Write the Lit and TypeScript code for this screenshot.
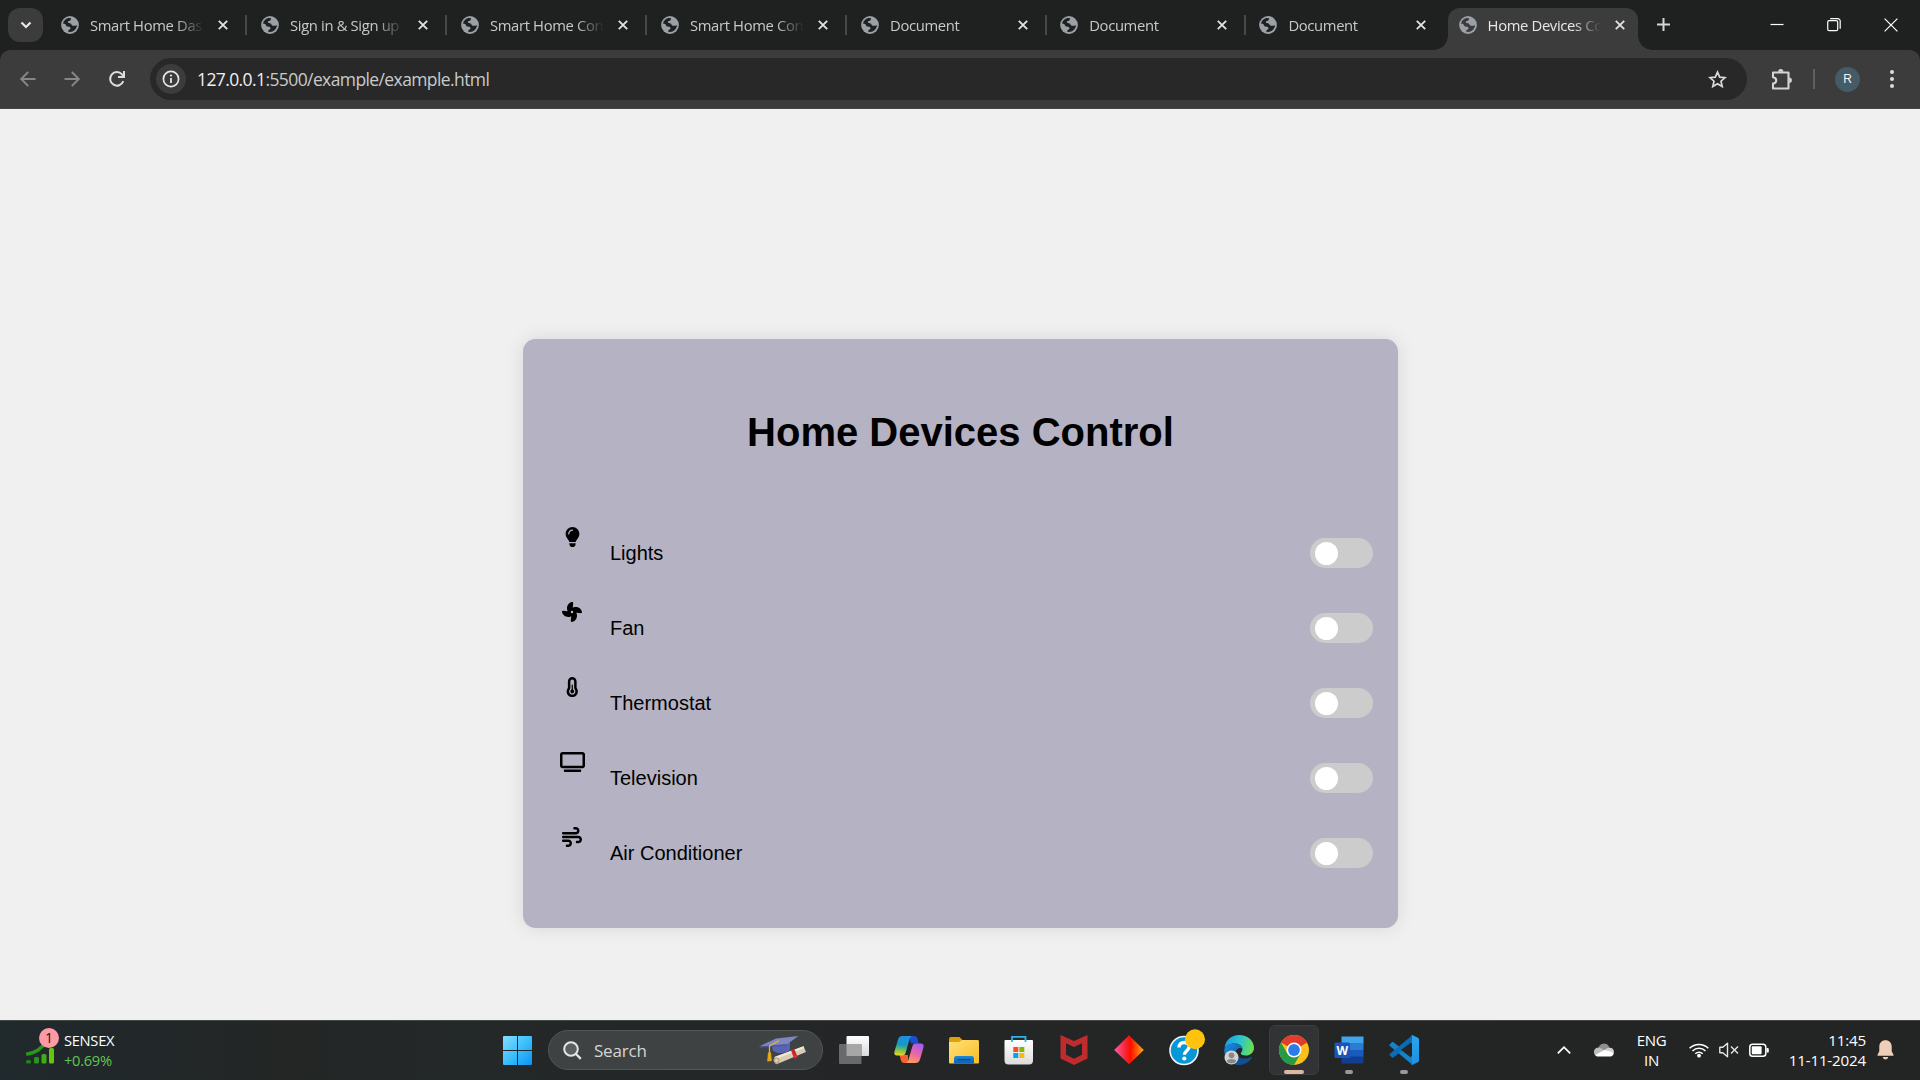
import { LitElement, html, svg, css, nothing } from "lit";
import { customElement, property } from "lit/decorators.js";
import { classMap } from "lit/directives/class-map.js";

/* ---------- browser tab ---------- */

@customElement("browser-tab")
class BrowserTab extends LitElement {
  @property() label = "";
  @property({ type: Boolean, reflect: true }) active = false;
  @property({ type: Boolean }) divided = false;

  static styles = css`
    :host { display: block; height: 42px; }
    .tab {
      position: relative; box-sizing: border-box; height: 42px; width: 190px;
      display: flex; align-items: center; padding: 0 12.5px 8px 11px;
      color: #c7c9c8; border-radius: 12px 12px 0 0;
    }
    .active { background: #3c3c3c; color: #e6e8e8; }
    .active::before, .active::after {
      content: ""; position: absolute; bottom: 0; width: 14px; height: 14px;
    }
    .active::before { left: -14px; background: radial-gradient(circle at 0 0, transparent 13.5px, #3c3c3c 14px); }
    .active::after { right: -14px; background: radial-gradient(circle at 100% 0, transparent 13.5px, #3c3c3c 14px); }
    .favicon { width: 18px; height: 18px; flex: none; }
    .label {
      flex: 1; min-width: 0; margin: 0 12px 0 11px; white-space: nowrap;
      font: 14.8px/22px "Open Sans", sans-serif; letter-spacing: -0.35px;
      -webkit-mask-image: linear-gradient(90deg, #000 calc(100% - 30px), transparent calc(100% - 2px));
      mask-image: linear-gradient(90deg, #000 calc(100% - 30px), transparent calc(100% - 2px));
    }
    .close { width: 10px; height: 10px; flex: none; }
    .active .close { position: relative; left: -0.5px; }
    .divided::after {
      content: ""; position: absolute; right: -7px; top: 7px; width: 2px; height: 20px; background: #474848;
    }
  `;

  render() {
    return html`<div class=${classMap({ tab: true, active: this.active, divided: this.divided })}>
      <svg class="favicon" viewBox="0 0 18 18">
        <circle cx="9" cy="9" r="8.9" fill="#9aa0a6" />
        <path fill=${this.active ? "#3c3c3c" : "#1f2120"}
          d="M2 7.6C2.5 4.7 4.600 2.600 7.500 2l2.600 .3c-.1 1.600-.7 2.500-2.100 2.700-1 .2-1.200 .6-1.100 1.500 .7 .7 1.700 .5 2.700 1 1.100 .6 .9 1.900 2.100 2.200 1.400 .3 2.900-.2 4.400-.5-.3 2.800-2.200 5.300-4.700 6.300-.6 .3-1.500 .4-2.200 .500l-1.900-.2c-.3-1.200 .3-1.900 1.400-2.300 1-.4 1.100-1.500 .3-2.200-1.200-1-2.700-.3-3.600-1.300-.7-.7-.5-1.600-1.300-2-.7-.3-1.300-.1-2.100-.4z" />
      </svg>
      <span class="label">${this.label}</span>
      <svg class="close" viewBox="0 0 10 10"><path d="M.8.8l8.400 8.400M9.200.8L.8 9.200" stroke="#e3e3e3" stroke-width="1.800" /></svg>
    </div>`;
  }
}

/* ---------- browser window frame ---------- */

@customElement("browser-chrome")
class BrowserChrome extends LitElement {
  static styles = css`
    :host { display: block; background: #1f2120; }
    .strip { display: flex; height: 50px; padding: 8px 0 0 8px; box-sizing: border-box; }
    .menu { width: 35px; height: 34px; border-radius: 12px; background: #3c3c3c; display: grid; place-items: center; }
    .tabs { display: flex; gap: 10px; margin-left: 7px; }
    .tabs .narrow { margin-left: -0.8px; }
    .plus { margin: 10px 0 0 19.5px; width: 13px; height: 13px; }
    .controls { margin-left: auto; display: flex; align-items: flex-start; gap: 43px; padding: 10px 22px 0 0; }
    .controls svg { width: 14px; height: 14px; }
    .bar {
      height: 59px; box-sizing: border-box; background: #3c3c3c; border-radius: 10px 10px 0 0;
      border-bottom: 1px solid #4a4646; display: flex; align-items: center; padding: 0 21px 0 19px;
    }
    .nav { width: 18px; height: 18px; margin-right: 26px; }
    .reload { width: 18px; height: 18px; margin: 0 25px 0 1px; }
    .omni {
      width: 1597px; height: 42px; box-sizing: border-box; border-radius: 21px; background: #282828;
      display: flex; align-items: center; padding: 0 20px 0 6px; margin-left: -1px;
    }
    .info { width: 30px; height: 30px; border-radius: 50%; background: #3c3c3c; display: grid; place-items: center; }
    .url { margin-left: 11px; flex: 1; font: 17.5px/26px "Open Sans", sans-serif; letter-spacing: -0.6px; color: #c9cbcb; }
    .host { color: #f0f0f0; }
    .puzzle { width: 21px; height: 22px; margin: 0 0.5px 0 23.5px; }
    .rule { width: 2px; height: 20px; background: #5f6060; margin: 0 20px 0 21px; }
    .avatar {
      width: 25px; height: 25px; border-radius: 50%; background: #455b68; color: #f2f5f7;
      display: grid; place-items: center; font: 12px/25px "Liberation Sans", sans-serif;
    }
    .dots { width: 4px; height: 18px; margin-left: auto; margin-right: 5px; }
  `;

  private titles = [
    "Smart Home Das", "Sign in & Sign up", "Smart Home Con", "Smart Home Con",
    "Document", "Document", "Document", "Home Devices Co",
  ];

  render() {
    const last = this.titles.length - 1;
    return html`
      <div class="strip">
        <div class="menu"><svg width="12" height="8" viewBox="0 0 12 8" fill="none" stroke="#e8e8e8" stroke-width="2.200"><path d="M1.500 1.500L6 6l4.500-4.500" /></svg></div>
        <div class="tabs">
          ${this.titles.map((t, i) => html`<browser-tab class=${i > 4 ? "narrow" : ""} .label=${t} .active=${i === last} .divided=${i < last - 1}></browser-tab>`)}
        </div>
        <svg class="plus" viewBox="0 0 13 13"><path d="M6.500 0v13M0 6.500h13" stroke="#d5d6d6" stroke-width="2" /></svg>
        <div class="controls">
          <svg viewBox="0 0 14 14"><path d="M.5 6.500h13" stroke="#fff" stroke-width="1.200" /></svg>
          <svg viewBox="0 0 14 14" fill="none" stroke="#fff" stroke-width="1.200"><rect x=".7" y="2.700" width="10" height="10" rx="1.500" /><path d="M3.200.7h7.600a2.400 2.400 0 0 1 2.400 2.400v7.600" /></svg>
          <svg viewBox="0 0 14 14"><path d="M.6.6l12.800 12.800M13.400.6L.6 13.400" stroke="#fff" stroke-width="1.200" /></svg>
        </div>
      </div>
      <div class="bar">
        <svg class="nav" viewBox="0 0 18 18" fill="none" stroke="#858686" stroke-width="1.900"><path d="M16.500 9H2.500M9.200 2L2.200 9l7 7" /></svg>
        <svg class="nav" viewBox="0 0 18 18" fill="none" stroke="#858686" stroke-width="1.900"><path d="M1.500 9h14M8.800 2l7 7-7 7" /></svg>
        <svg class="reload" viewBox="0 0 18 18" fill="none" stroke="#dcdddd" stroke-width="2"><path d="M15.300 11.200A6.800 6.800 0 1 1 14 4.300L16 6.500M16 1v6h-6" /></svg>
        <div class="omni">
          <div class="info"><svg width="18" height="18" viewBox="0 0 18 18"><circle cx="9" cy="9" r="7.600" fill="none" stroke="#e6e6e6" stroke-width="1.700" /><path d="M9 8v5" stroke="#e6e6e6" stroke-width="1.800" /><circle cx="9" cy="5.500" r="1.100" fill="#e6e6e6" /></svg></div>
          <span class="url"><span class="host">127.0.0.1</span>:5500/example/example.html</span>
          <svg width="19" height="19" viewBox="0 0 19 19" fill="none" stroke="#d8d9d9" stroke-width="1.700"><path d="M9.500 2.200l2.200 4.900 5.300.5-4 3.600 1.200 5.300-4.700-2.800-4.700 2.800L6 11.200 2 7.600l5.300-.5z" /></svg>
        </div>
        <svg class="puzzle" viewBox="0 0 21 22"><path d="M2 4.500h15.500v16H2v-5c4.300-.6 4.300-5.600 0-6.200z" fill="none" stroke="#d3d4d4" stroke-width="2.100" stroke-linejoin="round" /><path d="M7 3.800a2.700 2.700 0 0 1 5.400 0zM18.200 9.500a2.700 2.700 0 0 1 0 5.400z" fill="#d3d4d4" /></svg>
        <div class="rule"></div>
        <div class="avatar">R</div>
        <svg class="dots" viewBox="0 0 4 18" fill="#dcdddd"><circle cx="2" cy="2.100" r="2" /><circle cx="2" cy="9" r="2" /><circle cx="2" cy="15.900" r="2" /></svg>
      </div>`;
  }
}

/* ---------- page: device card ---------- */

interface Device { name: string; box: string; width: number; path: string; }

const DEVICES: Device[] = [
  { name: "Lights", box: "0 0 384 512", width: 15, path: "M272 384c9.600-31.900 29.500-59.100 49.200-86.200l0 0c5.200-7.100 10.400-14.200 15.400-21.400c19.800-28.500 31.400-63 31.400-100.300C368 78.800 289.200 0 192 0S16 78.800 16 176c0 37.300 11.600 71.900 31.400 100.300c5 7.200 10.200 14.300 15.400 21.400l0 0c19.800 27.100 39.700 54.400 49.200 86.200H272zM192 512c44.200 0 80-35.800 80-80V416H112v16c0 44.200 35.800 80 80 80zM112 176c0 8.800-7.200 16-16 16s-16-7.200-16-16c0-61.900 50.100-112 112-112c8.800 0 16 7.200 16 16s-7.200 16-16 16c-44.200 0-80 35.800-80 80z" },
  { name: "Fan", box: "0 0 512 512", width: 20, path: "M258.600 0c-1.700 0-3.400 .1-5.100 .5C168 17 115.600 102.300 130.500 189.300c2.900 17 8.400 32.900 15.900 47.400L32 224H29.400C13.200 224 0 237.200 0 253.400c0 1.700 .1 3.400 .5 5.100C17 344 102.300 396.400 189.300 381.500c17-2.900 32.900-8.400 47.400-15.900L224 480v2.600c0 16.200 13.200 29.400 29.400 29.400c1.700 0 3.400-.1 5.100-.5C344 495 396.400 409.700 381.500 322.700c-2.900-17-8.400-32.900-15.900-47.400L480 288h2.600c16.200 0 29.400-13.200 29.400-29.400c0-1.700-.1-3.400-.5-5.100C495 168 409.700 115.600 322.700 130.500c-17 2.900-32.900 8.400-47.400 15.900L288 32V29.400C288 13.200 274.800 0 258.600 0zM256 224a32 32 0 1 1 0 64 32 32 0 1 1 0-64z" },
  { name: "Thermostat", box: "0 0 320 512", width: 12.5, path: "M160 64c-26.500 0-48 21.500-48 48V276.500c0 17.300-7.100 31.900-15.300 42.500C86.200 332.600 80 349.500 80 368c0 44.200 35.800 80 80 80s80-35.800 80-80c0-18.500-6.200-35.400-16.700-48.900c-8.200-10.600-15.300-25.200-15.300-42.500V112c0-26.500-21.500-48-48-48zM48 112C48 50.200 98.100 0 160 0s112 50.100 112 112V276.500c0 .1 .1 .3 .2 .6c.2 .6 .8 1.600 1.700 2.800c18.900 24.400 30.100 55 30.100 88.100c0 79.500-64.500 144-144 144S16 447.500 16 368c0-33.200 11.200-63.800 30.100-88.100c.9-1.200 1.500-2.200 1.700-2.800c.1-.3 .2-.5 .2-.6V112zM208 368c0 26.500-21.500 48-48 48s-48-21.500-48-48c0-20.900 13.400-38.700 32-45.300V208c0-8.800 7.200-16 16-16s16 7.200 16 16V322.700c18.600 6.600 32 24.400 32 45.300z" },
  { name: "Television", box: "0 0 640 512", width: 25, path: "M64 64V352H576V64H64zM0 64C0 28.700 28.700 0 64 0H576c35.300 0 64 28.700 64 64V352c0 35.300-28.700 64-64 64H64c-35.300 0-64-28.700-64-64V64zM128 448H512c17.700 0 32 14.300 32 32s-14.300 32-32 32H128c-17.700 0-32-14.300-32-32s14.300-32 32-32z" },
  { name: "Air Conditioner", box: "0 0 512 512", width: 20, path: "M288 32c0 17.700 14.300 32 32 32h32c17.700 0 32 14.300 32 32s-14.300 32-32 32H32c-17.700 0-32 14.300-32 32s14.300 32 32 32H352c53 0 96-43 96-96s-43-96-96-96H320c-17.700 0-32 14.300-32 32zm64 352c0 17.700 14.300 32 32 32h32c53 0 96-43 96-96s-43-96-96-96H32c-17.700 0-32 14.300-32 32s14.300 32 32 32H416c17.700 0 32 14.300 32 32s-14.300 32-32 32H384c-17.700 0-32 14.300-32 32zM128 512h32c53 0 96-43 96-96s-43-96-96-96H32c-17.700 0-32 14.300-32 32s14.300 32 32 32H160c17.700 0 32 14.300 32 32s-14.300 32-32 32H128c-17.700 0-32 14.300-32 32s14.300 32 32 32z" },
];

@customElement("device-card")
class DeviceCard extends LitElement {
  static styles = css`
    :host {
      display: block; box-sizing: border-box; width: 875px; height: 589px; padding: 69px 25px 0 25px;
      background: #b5b3c3; border-radius: 12.5px; box-shadow: 0 0 19px rgba(0, 0, 0, 0.1);
      font-family: "Liberation Sans", Arial, sans-serif; color: #000;
    }
    h1 { margin: 0 0 59px; font-size: 40px; line-height: 48px; text-align: center; font-weight: 700; }
    .row { display: flex; align-items: center; height: 75px; }
    .icon { width: 50px; height: 20px; display: flex; justify-content: center; margin: 0 0 31px -1px; }
    .name { flex: 1; margin-left: 13px; font-size: 20px; line-height: 24px; }
    .toggle {
      width: 63px; height: 30px; box-sizing: border-box; border-radius: 15px; background: #ccc;
      display: flex; align-items: center; padding: 1px 0 0 5px;
    }
    .knob { width: 23px; height: 23px; border-radius: 50%; background: #fff; }
  `;

  render() {
    return html`<h1>Home Devices Control</h1>
      ${DEVICES.map((d) => html`<div class="row">
        <div class="icon"><svg viewBox=${d.box} width=${d.width} height="20"><path d=${d.path} /></svg></div>
        <span class="name">${d.name}</span>
        <div class="toggle"><div class="knob"></div></div>
      </div>`)}`;
  }
}

/* ---------- desktop taskbar ---------- */

const taskView = svg`
  <defs><linearGradient id="tv" x2="0" y2="1"><stop stop-color="#fff" /><stop offset="1" stop-color="#d9d9d9" /></linearGradient></defs>
  <rect x="7.500" y="1" width="22.500" height="20" rx="1" fill="url(#tv)" />
  <rect y="9" width="22.500" height="20" rx="1" fill="#6a6a6a" />
  <path d="M7.500 9h14a1 1 0 0 1 1 1v11h-15z" fill="#a6a6a6" />`;

const copilot = svg`
  <defs>
    <linearGradient id="ca" x1=".4" y1="0" x2=".3" y2="1"><stop stop-color="#1f8fe0" /><stop offset=".45" stop-color="#1699c4" /><stop offset=".7" stop-color="#6fbf5a" /><stop offset="1" stop-color="#f3d51c" /></linearGradient>
    <linearGradient id="cb" x1=".7" y1="0" x2=".3" y2="1"><stop stop-color="#a55cf0" /><stop offset=".5" stop-color="#e567a5" /><stop offset="1" stop-color="#ff9a5c" /></linearGradient>
  </defs>
  <path d="M15 1h5c2 0 3 1 3.500 2.800L24.800 8.500H17z" fill="#1b4fd0" />
  <path d="M14 28h-4c-1.700 0-2.600-1-3-2.500L5.500 20H14z" fill="#f4622d" />
  <path d="M8.500 1h9.500c-1.500.8-2.100 2-2.600 3.800L11.500 18c-.6 1.800-1.700 2.500-3.200 2.500H3C.8 20.500 0 19 .4 17L4 4.500C4.800 2 6.200 1 8.500 1z" fill="url(#ca)" />
  <path d="M21.500 28H12c1.500-.8 2.100-2 2.600-3.800L18.500 11c.6-1.800 1.700-2.500 3.200-2.500H27c2.200 0 3 1.500 2.600 3.500L26 24.500c-.8 2.500-2.200 3.500-4.500 3.500z" fill="url(#cb)" />`;

const folder = svg`
  <defs><linearGradient id="fo" x2="1" y2="1"><stop stop-color="#ffe07a" /><stop offset="1" stop-color="#fbbd22" /></linearGradient><linearGradient id="fb" x2="0" y2="1"><stop stop-color="#1c86d8" /><stop offset="1" stop-color="#0b63b4" /></linearGradient></defs>
  <path d="M0 4a2 2 0 0 1 2-2h7.500c1 0 1.600.5 2.200 1.200L13.500 5H28a2 2 0 0 1 2 2v3H0z" fill="#e0a106" />
  <path d="M0 7h10l3-2h15.500A1.500 1.500 0 0 1 30 6.500V27.500a1 1 0 0 1-1 1H1a1 1 0 0 1-1-1z" fill="url(#fo)" />
  <path d="M5 28.500V23.500A2.500 2.500 0 0 1 7.500 21h15a2.500 2.500 0 0 1 2.500 2.500v5z" fill="url(#fb)" />
  <path d="M8.500 24.700h13" stroke="#07498c" stroke-width="1.300" />`;

const store = svg`
  <defs><linearGradient id="st" x2="0" y2="1"><stop stop-color="#fff" /><stop offset="1" stop-color="#dcdcdc" /></linearGradient></defs>
  <path d="M.5 6a1 1 0 0 1 1-1h26.500a1 1 0 0 1 1 1v19.500a4 4 0 0 1-4 4H4.500a4 4 0 0 1-4-4z" fill="url(#st)" />
  <path d="M8 7V1.800h13.500V7" fill="none" stroke="#2ab4ec" stroke-width="1.800" />
  <path d="M9.300 12h5v5h-5z" fill="#f25022" /><path d="M15.300 12h5v5h-5z" fill="#7fba00" />
  <path d="M9.300 18h5v5h-5z" fill="#00a4ef" /><path d="M15.300 18h5v5h-5z" fill="#ffb900" />`;

const shield = svg`
  <path d="M1.500 0L15 6 28.500 0v23.500L15 30 1.500 23.500zM7 8.200v11.600l8 4 8-4V8.200l-8 3.700z" fill="#c02c2e" fill-rule="evenodd" />`;

const diamond = svg`
  <defs><linearGradient id="di"><stop stop-color="#ff5cae" /><stop offset=".4" stop-color="#f5232c" /><stop offset=".55" stop-color="#ff0d00" /><stop offset="1" stop-color="#ffae12" /></linearGradient></defs>
  <path d="M15 .3L29.800 15 15 29.300.2 15z" fill="url(#di)" />`;

const help = svg`
  <circle cx="15" cy="15.500" r="14.800" fill="#f4f8fa" /><circle cx="15" cy="15.500" r="13.200" fill="#0697d7" />
  <path d="M10 12.500c0-3.300 2.200-5 5.200-5 3 0 5 1.600 5 4.200 0 4-4.800 4-4.800 8" fill="none" stroke="#fff" stroke-width="3.400" />
  <circle cx="15.300" cy="23.500" r="2.100" fill="#fff" /><circle cx="26" cy="4.200" r="10" fill="#ffc20e" />`;

const edge = svg`
  <defs>
    <linearGradient id="ea" x1="0" y1=".3" x2="1" y2=".5"><stop stop-color="#1b9de2" /><stop offset=".5" stop-color="#2cc3d1" /><stop offset="1" stop-color="#6be04f" /></linearGradient>
    <linearGradient id="eb" x2="1" y2="1"><stop stop-color="#1a8de0" /><stop offset="1" stop-color="#0b4c9e" /></linearGradient>
  </defs>
  <path d="M.5 13C1.500 5 7.500 0 15 0c9 0 15 6 15 12.700 0 4.800-3.800 7.800-8.300 7.800-3.500 0-5-1.300-5-2.200 0-.6 1.700-1.500 1.700-4C18.400 11 15 8.500 11 8.500 6 8.500 2 10.500.5 13z" fill="url(#ea)" />
  <path d="M.3 15C.5 11.500 4.500 8.500 9.500 8.500c5 0 8.900 2.500 8.900 5.300-1-1.500-6.900-1-6.900 5 0 5 4.500 9.200 10 7.700-3 3-6.500 3.700-9 3.200C5 28.500 0 22.500.3 15z" fill="url(#eb)" />
  <path d="M11.500 17.500c1 5 8 8 15.500 4.500.8-.3 1.200.3.800 1-2.800 4.500-8 7.300-13.300 6.900-6-.6-8.500-9.600-3-12.400z" fill="#104f93" />
  <circle cx="7.500" cy="22.500" r="7" fill="#d5d3d1" /><circle cx="7.500" cy="20.300" r="2.900" fill="#8b8885" /><path d="M2.800 26.200c0-3 9.400-3 9.400 0-2.200 2.900-7.200 2.900-9.400 0z" fill="#8b8885" />`;

const chrome = svg`
  <circle cx="15" cy="15" r="15" fill="#fbc01a" />
  <path d="M15 15L2 7.500A15 15 0 0 1 28 7.500z" fill="#e33b2e" />
  <path d="M15 7.500h13L15 15z" fill="#e33b2e" />
  <path d="M2 7.500A15 15 0 0 0 15 30l6.500-11.200L15 15 8.500 18.800z" fill="#259a49" />
  <circle cx="15" cy="15" r="7.500" fill="#fff" /><circle cx="15" cy="15" r="5.900" fill="#2c7bea" />`;

const word = svg`
  <rect x="7.500" y="1.500" width="22" height="7" fill="#41a5ee" /><rect x="7.500" y="8" width="22" height="7" fill="#2b7cd3" />
  <rect x="7.500" y="15" width="22" height="7" fill="#185abd" /><rect x="7.500" y="21.500" width="22" height="7" rx="1" fill="#103f91" />
  <rect x=".5" y="7.500" width="15.500" height="15.500" rx="1.500" fill="#1a56ba" />
  <text x="8.200" y="19.500" text-anchor="middle" font-family="Open Sans, sans-serif" font-weight="700" font-size="12" fill="#fff">W</text>`;

const vscode = svg`
  <defs><linearGradient id="vs" x2="0" y2="1"><stop stop-color="#2aa6ee" /><stop offset="1" stop-color="#1e8fe0" /></linearGradient></defs>
  <path d="M.5 9.500L3 7.200c.4-.3.9-.3 1.400 0L23 21.500V29.500L.6 10.700c-.3-.4-.3-.8-.1-1.200z" fill="#1583cc" />
  <path d="M.5 20L3 22.500c.4.300.9.300 1.400 0L23 8V.5L.6 19c-.3.300-.3.700-.1 1z" fill="#0a6cb4" />
  <path d="M21.800.3c.6-.4 1.200-.3 1.800 0l5.300 2.500c.7.400 1.100 1 1.100 1.700v21c0 .8-.4 1.400-1.100 1.700l-5.300 2.500c-.7.300-1.400.3-1.900-.1.800.4 1.300-.2 1.300-1V1.300c0-.8-.5-1.300-1.200-1z" fill="url(#vs)" />
  <path d="M22 7.500V22.500L12 15z" fill="#242526" />`;

@customElement("task-bar")
class TaskBar extends LitElement {
  static styles = css`
    :host {
      display: flex; align-items: center; box-sizing: border-box; height: 60px; padding-bottom: 1px;
      background: linear-gradient(90deg, #20292d 0, #232625 280px, #232829 460px, #242526 900px, #232524 100%);
      border-top: 1px solid #434746; font-family: "Open Sans", sans-serif; color: #fff;
    }
    .widget { display: flex; align-items: center; width: 477px; padding-left: 26px; box-sizing: border-box; }
    .stock { width: 34px; height: 40px; margin-bottom: 6px; }
    .quote { margin: 0 0 1px 4px; font-size: 14.7px; line-height: 20px; letter-spacing: -0.3px; }
    .gain { color: #62c554; }
    .start { width: 29px; height: 29px; margin-left: 26px; }
    .search {
      width: 275px; height: 40px; box-sizing: border-box; border-radius: 20px; margin-left: 16px;
      background: #3e4243; border: 1px solid #525657; display: flex; align-items: center; padding: 0 15px 0 14px;
    }
    .hint { flex: 1; margin-left: 12px; font-size: 17px; letter-spacing: -0.2px; color: #d4d6d6; }
    .apps { display: flex; margin-left: 3px; }
    .app {
      position: relative; width: 55px; height: 50px; display: grid; place-items: center;
    }
    .app svg { width: 30px; height: 30px; overflow: visible; z-index: 1; }
    .current::before {
      content: ""; position: absolute; inset: 0 2.5px; border-radius: 6px; background: #313334; border: 1px solid #3b3d3e; box-sizing: border-box;
    }
    .mark { position: absolute; bottom: 1px; width: 8px; height: 4px; border-radius: 2px; background: #969a9b; }
    .current .mark { width: 20px; background: #dcb8a0; }
    .tray { margin-left: auto; display: flex; align-items: center; padding-right: 26.5px; }
    .cloud { margin-left: 23px; }
    .lang { width: 40px; text-align: center; font-size: 15px; line-height: 20px; letter-spacing: -0.3px; margin: 0 17px 0 18px; }
    .lang, .clock { margin-bottom: 1px; }
    .status { display: flex; gap: 10px; }
    .clock { width: 88px; margin-left: 9.5px; text-align: right; font-size: 15.2px; line-height: 20px; letter-spacing: -0.2px; white-space: nowrap; }
    .bell { margin-left: 10.5px; }
  `;

  private app(icon: unknown, state = "") {
    return html`<div class=${classMap({ app: true, current: state === "current" })}>
      <svg viewBox="0 0 30 30">${icon}</svg>
      ${state ? html`<span class="mark"></span>` : nothing}
    </div>`;
  }

  render() {
    return html`
      <div class="widget">
        <svg class="stock" viewBox="0 0 34 40">
          <path d="M1.500 27C10 25.500 15 22 21 14" fill="none" stroke="#269a18" stroke-width="3.600" stroke-linecap="round" />
          <g><rect y="33" width="5" height="3.500" rx="1.500" fill="#148a1c" /><rect x="8" y="30" width="5" height="6.500" rx="1.500" fill="#269a18" /><rect x="15.500" y="27" width="5" height="9.500" rx="1.500" fill="#3fae14" /><rect x="23" y="21" width="5" height="15.500" rx="1.500" fill="#68c410" /></g>
          <circle cx="23" cy="11" r="10" fill="#ff9aa5" />
          <text x="23" y="16" text-anchor="middle" font-family="Open Sans, sans-serif" font-size="14" fill="#151515">1</text>
        </svg>
        <div class="quote"><div>SENSEX</div><div class="gain">+0.69%</div></div>
      </div>
      <svg class="start" viewBox="0 0 29 29">
        <defs><linearGradient id="w" gradientUnits="userSpaceOnUse" x2="29" y2="29"><stop stop-color="#86dcff" /><stop offset=".5" stop-color="#3cc0fc" /><stop offset="1" stop-color="#0a93f5" /></linearGradient></defs>
        <path fill="url(#w)" d="M1 0h13v14H0V1a1 1 0 0 1 1-1zM15 0h13a1 1 0 0 1 1 1v13H15zM0 15h14v14H1a1 1 0 0 1-1-1zM15 15h14v13a1 1 0 0 1-1 1H15z" />
      </svg>
      <div class="search">
        <svg width="19" height="19" viewBox="0 0 19 19" fill="none" stroke="#e4e6e6" stroke-width="2"><circle cx="8" cy="8" r="6.800" fill="#5a5f61" /><path d="M13 13l4.800 4.800" stroke-width="2.400" /></svg>
        <span class="hint">Search</span>
        <svg width="48" height="30" viewBox="0 0 48 30">
          <path d="M13 8.500l18-2v8.500c-4 4-13 4-17.500.5z" fill="#5863b4" />
          <path d="M0 11.500L17 3.500 39.500 1 28 9.200z" fill="#7f87bf" /><path d="M0 11.500L28 9.200l-.5 1.400L2 12.700z" fill="#4c569c" />
          <path d="M20 5.700L10.500 11v7" fill="none" stroke="#e6b23c" stroke-width="1.300" /><path d="M9 17.500h3l.8 8.500-4.600.5z" fill="#e3a51c" />
          <path d="M15.500 22L44.500 11.200l2.500 5.800-29.500 12.200c-2.500-1-3.500-4.800-2-7.200z" fill="#d8cdb4" /><path d="M16 21.800L44.500 11.200l.8 2-27.800 10.600z" fill="#f0e8d4" />
          <circle cx="17.500" cy="25.500" r="2.600" fill="none" stroke="#9d8f70" /><path d="M32 15.600l3.500-1.300 2.600 6.400-3.500 1.500z" fill="#c8262a" /><path d="M35 19l4 2.800-3.800 2z" fill="#e12b2e" />
        </svg>
      </div>
      <div class="apps">
        ${this.app(taskView)} ${this.app(copilot)} ${this.app(folder)} ${this.app(store)} ${this.app(shield)}
        ${this.app(diamond)} ${this.app(help)} ${this.app(edge)} ${this.app(chrome, "current")}
        ${this.app(word, "open")} ${this.app(vscode, "open")}
      </div>
      <div class="tray">
        <svg width="14" height="10" viewBox="0 0 14 10" fill="none" stroke="#fff" stroke-width="1.700"><path d="M.8 8.400L7 2.200l6.200 6.200" /></svg>
        <svg class="cloud" width="20" height="14" viewBox="0 0 20 14">
          <path d="M4.500 5.500A5.600 5.600 0 0 1 15 3.500l1 3-10 2z" fill="#8f8f8f" />
          <path d="M0 9.500A4.500 4.500 0 0 1 6.500 5l9 5.500L3 13.200C1 12.500 0 11.500 0 9.500z" fill="#bdbdbd" />
          <path d="M15.800 4.700A4.400 4.400 0 0 1 20 9l-5 2-4.500-4c1.500-1.500 3-2.500 5.300-2.300z" fill="#cfcfcf" />
          <path d="M1.200 12L10.500 7l9.400 2.500c0 2.300-1.500 4-3.700 4H4.400C3 13.500 2 13 1.200 12z" fill="#fff" />
        </svg>
        <div class="lang"><div>ENG</div><div>IN</div></div>
        <div class="status">
          <svg width="20" height="16" viewBox="0 0 20 16" fill="none" stroke="#fff" stroke-width="1.500"><path d="M.6 6.300a13.300 13.300 0 0 1 18.800 0M3.500 9a9.200 9.200 0 0 1 13 0M6.300 11.700a5.200 5.200 0 0 1 7.400 0" /><circle cx="10" cy="13.700" r="1.900" fill="#fff" stroke="none" /></svg>
          <svg width="20" height="16" viewBox="0 0 20 16" fill="none" stroke="#e6e6e6" stroke-width="1.400"><path d="M.8 5.200h3L8.500 1.200v13.600L3.800 10.800h-3z" stroke-linejoin="round" /><path d="M12 4.500l7 7M19 4.500l-7 7" /></svg>
          <svg width="20" height="16" viewBox="0 0 20 16"><rect x=".8" y="2.300" width="16" height="12" rx="2.800" fill="none" stroke="#fff" stroke-width="1.500" /><rect x="2.800" y="4.300" width="9.800" height="8" rx="1" fill="#fff" /><path d="M17.600 6h1a1.200 1.200 0 0 1 1.200 1.200v2.200a1.200 1.200 0 0 1-1.200 1.200h-1z" fill="#fff" /></svg>
        </div>
        <div class="clock"><div>11:45</div><div>11-11-2024</div></div>
        <svg class="bell" width="17" height="20" viewBox="0 0 17 20" fill="#edcfb7"><path d="M8.500.3c3.700 0 6.200 2.700 6.200 6.300v4.600l1.800 3.600v.9H.5v-.9l1.800-3.600V6.600C2.300 3 4.800.3 8.500.3zM5.700 17h5.600c-.3 1.600-1.400 2.400-2.800 2.400S6 18.600 5.700 17z" /></svg>
      </div>`;
  }
}

/* ---------- root ---------- */

@customElement("app-root")
class AppRoot extends LitElement {
  static styles = css`
    :host { display: flex; flex-direction: column; width: 1920px; height: 1080px; overflow: hidden; }
    main { flex: 1; display: flex; justify-content: center; align-items: flex-start; padding-top: 230px; padding-left: 1px; background: #f0f0f0; }
  `;

  render() {
    return html`<browser-chrome></browser-chrome>
      <main><device-card></device-card></main>
      <task-bar></task-bar>`;
  }
}
